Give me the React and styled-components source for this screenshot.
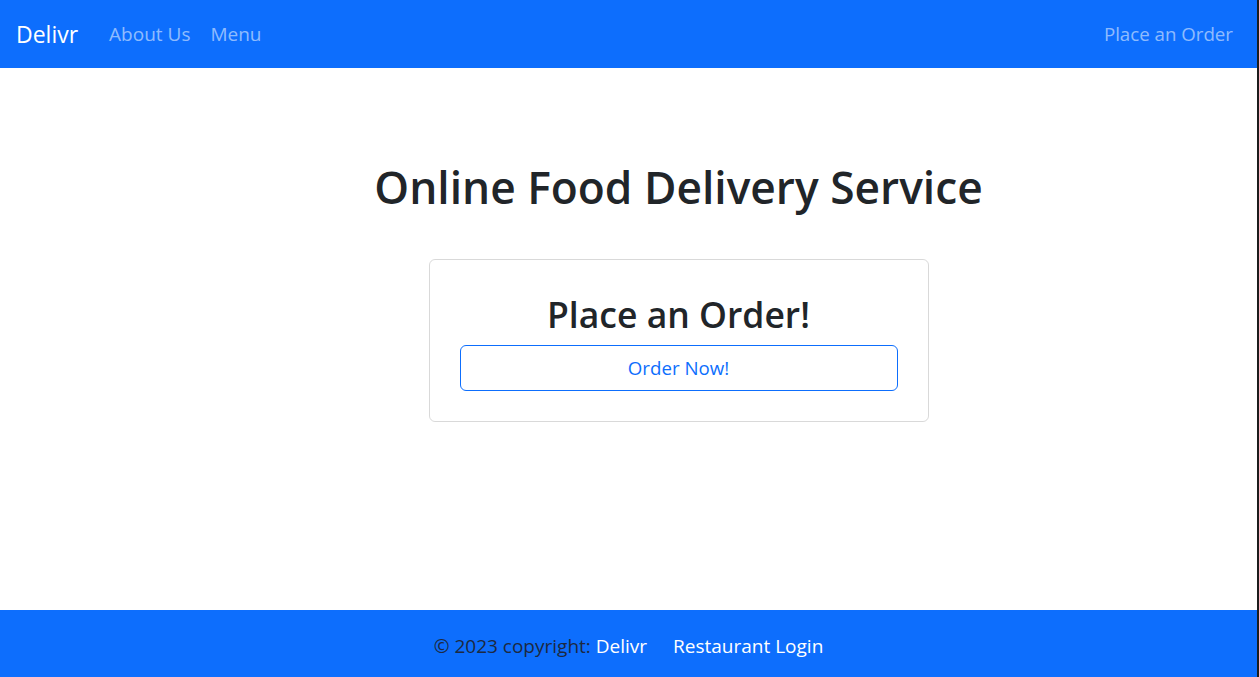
import React from "react";
import styled, { createGlobalStyle } from "styled-components";

const GlobalStyle = createGlobalStyle`
  html, body {
    margin: 0;
    padding: 0;
    background: #ffffff;
  }
  body {
    font-family: "Open Sans", "Noto Sans", "Liberation Sans", sans-serif;
    color: #212529;
  }
  * {
    box-sizing: border-box;
  }
`;

const Page = styled.div`
  min-height: 100vh;
  display: flex;
  flex-direction: column;
  border-right: 2px solid #1c1c1c;
`;

const Navbar = styled.nav`
  height: 68px;
  background: #0d6efd;
  display: flex;
  align-items: center;
  padding: 0 14px 0 16px;
`;

const Brand = styled.a`
  font-size: 23px;
  line-height: 1.5;
  color: #ffffff;
  text-decoration: none;
  margin-right: 21px;
`;

const NavList = styled.div`
  display: flex;
  align-items: center;
  flex: 1;
`;

const NavLink = styled.a`
  font-size: ${(p) => (p.$push ? "18.7px" : "19px")};
  line-height: 1.5;
  padding: 0 10px;
  color: rgba(255, 255, 255, 0.55);
  text-decoration: none;
  margin-left: ${(p) => (p.$push ? "auto" : "0")};
`;

const Main = styled.main`
  flex: 1;
  display: flex;
  flex-direction: column;
  align-items: center;
  padding-left: 100px;
`;

const Title = styled.h1`
  margin: 93px 0 45px;
  font-size: 44.3px;
  font-weight: 600;
  line-height: 1.2;
  color: #212529;
`;

const Card = styled.div`
  width: 500px;
  border: 1px solid rgba(0, 0, 0, 0.15);
  border-radius: 6px;
  padding: 33px 30px 30px;
  display: flex;
  flex-direction: column;
  align-items: center;
`;

const CardTitle = styled.h2`
  margin: 0 0 9px;
  font-size: 35.5px;
  font-weight: 600;
  line-height: 1.2;
`;

const OutlineButton = styled.button`
  width: 100%;
  height: 46px;
  border: 1px solid #0d6efd;
  border-radius: 6px;
  background: transparent;
  color: #0d6efd;
  font-family: inherit;
  font-size: 18.7px;
  line-height: 1.5;
  cursor: pointer;
`;

const Footer = styled.footer`
  height: 67px;
  background: #0d6efd;
  display: flex;
  align-items: center;
  justify-content: center;
  padding-top: 5px;
  font-size: 19px;
  line-height: 1.5;
`;

const Copy = styled.span`
  color: #1d2940;
`;

const FooterLink = styled.a`
  color: #ffffff;
  text-decoration: none;
  margin-left: ${(p) => p.$gap || "0"};
`;

export default function App() {
  return (
    <>
      <GlobalStyle />
      <Page>
        <Navbar>
          <Brand href="#">Delivr</Brand>
          <NavList>
            <NavLink href="#">About Us</NavLink>
            <NavLink href="#">Menu</NavLink>
            <NavLink href="#" $push>
              Place an Order
            </NavLink>
          </NavList>
        </Navbar>
        <Main>
          <Title>Online Food Delivery Service</Title>
          <Card>
            <CardTitle>Place an Order!</CardTitle>
            <OutlineButton>Order Now!</OutlineButton>
          </Card>
        </Main>
        <Footer>
          <Copy>© 2023 copyright:&nbsp;</Copy>
          <FooterLink href="#">Delivr</FooterLink>
          <FooterLink href="#" $gap="26px">
            Restaurant Login
          </FooterLink>
        </Footer>
      </Page>
    </>
  );
}
